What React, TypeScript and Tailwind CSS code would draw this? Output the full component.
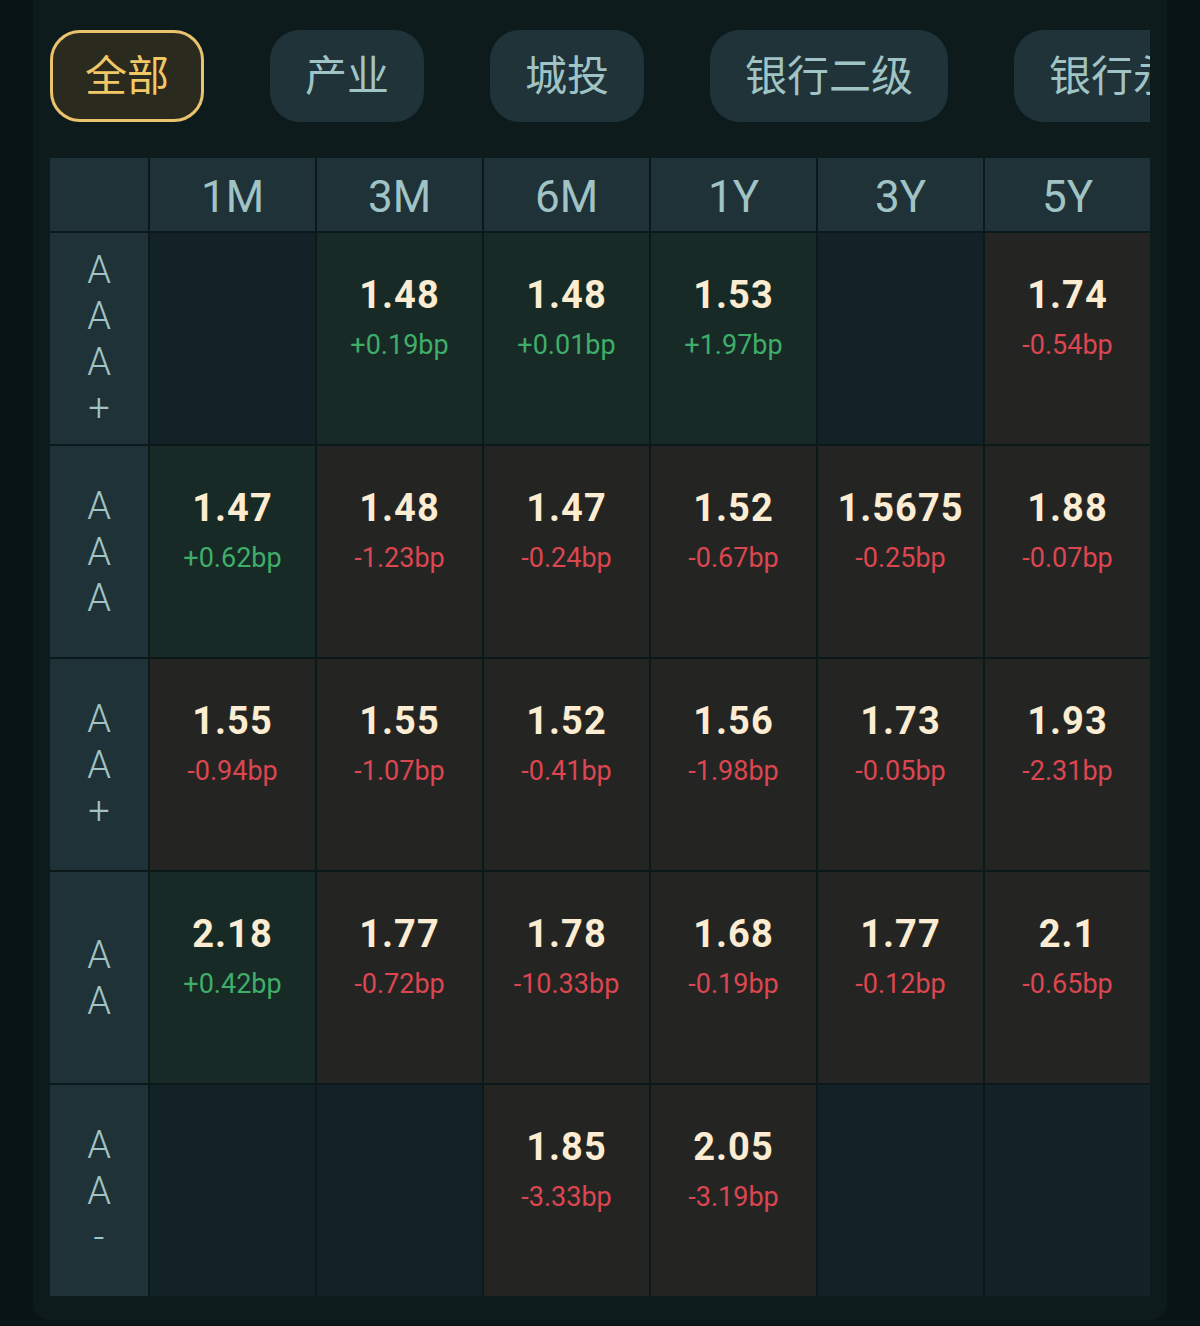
import React from "react"

type Cell = { v: string; d: string } | null

const tabs = ["全部", "产业", "城投", "银行二级", "银行永续"]
const terms = ["1M", "3M", "6M", "1Y", "3Y", "5Y"]

const rows: { label: string[]; cells: Cell[] }[] = [
  {
    label: ["A", "A", "A", "+"],
    cells: [
      null,
      { v: "1.48", d: "+0.19bp" },
      { v: "1.48", d: "+0.01bp" },
      { v: "1.53", d: "+1.97bp" },
      null,
      { v: "1.74", d: "-0.54bp" },
    ],
  },
  {
    label: ["A", "A", "A"],
    cells: [
      { v: "1.47", d: "+0.62bp" },
      { v: "1.48", d: "-1.23bp" },
      { v: "1.47", d: "-0.24bp" },
      { v: "1.52", d: "-0.67bp" },
      { v: "1.5675", d: "-0.25bp" },
      { v: "1.88", d: "-0.07bp" },
    ],
  },
  {
    label: ["A", "A", "+"],
    cells: [
      { v: "1.55", d: "-0.94bp" },
      { v: "1.55", d: "-1.07bp" },
      { v: "1.52", d: "-0.41bp" },
      { v: "1.56", d: "-1.98bp" },
      { v: "1.73", d: "-0.05bp" },
      { v: "1.93", d: "-2.31bp" },
    ],
  },
  {
    label: ["A", "A"],
    cells: [
      { v: "2.18", d: "+0.42bp" },
      { v: "1.77", d: "-0.72bp" },
      { v: "1.78", d: "-10.33bp" },
      { v: "1.68", d: "-0.19bp" },
      { v: "1.77", d: "-0.12bp" },
      { v: "2.1", d: "-0.65bp" },
    ],
  },
  {
    label: ["A", "A", "-"],
    cells: [
      null,
      null,
      { v: "1.85", d: "-3.33bp" },
      { v: "2.05", d: "-3.19bp" },
      null,
      null,
    ],
  },
]

function DataCell({ cell }: { cell: Cell }) {
  if (!cell) return <div className="h-[211px] bg-[#132226]" />
  const up = cell.d.startsWith("+")
  return (
    <div
      className={
        "h-[211px] flex flex-col items-center pt-[39px] " +
        (up ? "bg-[#172a25]" : "bg-[#242523]")
      }
    >
      <div className="text-[38px] leading-[46px] font-bold tracking-[1px] text-[#fbecd2]">
        {cell.v}
      </div>
      <div
        className={
          "mt-[12px] text-[27px] leading-[30px] " +
          (up ? "text-[#3fae6a]" : "text-[#dc4650]")
        }
      >
        {cell.d}
      </div>
    </div>
  )
}

export default function App() {
  return (
    <div className="min-h-[1326px] bg-[#081415] font-['Roboto','Noto_Sans_CJK_SC',sans-serif]">
      <div className="mx-[33px] bg-[#0e1b1d] rounded-b-2xl px-[17px] pt-[30px] pb-[24px]">
        {/* category tabs */}
        <div className="flex gap-[66px] overflow-hidden">
          {tabs.map((t, i) => (
            <div
              key={t}
              className={
                "shrink-0 h-[92px] rounded-[30px] flex items-center text-[42px] whitespace-nowrap " +
                (i === 0
                  ? "bg-[#2b2a1e] border-[3px] border-[#e9c36e] text-[#f2c766] px-[32px]"
                  : "bg-[#1f3338] text-[#a0c3c5] px-[35px]")
              }
            >
              {t}
            </div>
          ))}
        </div>

        {/* curve table */}
        <div className="mt-[36px] grid grid-cols-[98px_repeat(6,1fr)] gap-[2px] bg-[#0c191b]">
          <div className="h-[73px] bg-[#1f3237]" />
          {terms.map((t) => (
            <div
              key={t}
              className="h-[73px] pt-[4px] bg-[#1f3237] flex items-center justify-center text-[44px] text-[#a0c3c5]"
            >
              {t}
            </div>
          ))}
          {rows.map((r, ri) => (
            <React.Fragment key={ri}>
              <div className="h-[211px] bg-[#1f3237] flex flex-col items-center justify-center">
                {r.label.map((ch, ci) => (
                  <div key={ci} className="text-[38px] leading-[46px] font-light text-[#a0c3c5]">
                    {ch}
                  </div>
                ))}
              </div>
              {r.cells.map((c, ci) => (
                <DataCell key={ci} cell={c} />
              ))}
            </React.Fragment>
          ))}
        </div>
      </div>
    </div>
  )
}
